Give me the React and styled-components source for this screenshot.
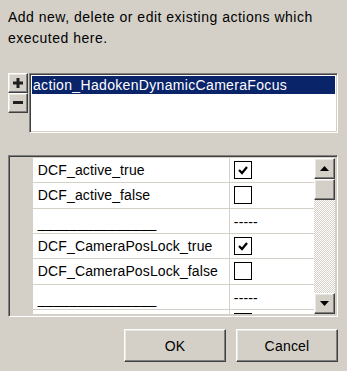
import React from 'react';
import styled, { createGlobalStyle, css } from 'styled-components';

const GlobalStyle = createGlobalStyle`
  html, body {
    margin: 0;
    padding: 0;
    background: #d4d0c8;
  }
  body {
    font-family: "Liberation Sans", Arial, sans-serif;
    font-size: 14px;
    color: #000;
  }
`;

const raised = css`
  box-sizing: border-box;
  background: #d4d0c8;
  border-style: solid;
  border-width: 1px;
  border-color: #ffffff #404040 #404040 #ffffff;
  box-shadow: inset -1px -1px 0 #808080, inset 1px 1px 0 #e8e6e1;
`;

const sunken = css`
  box-sizing: border-box;
  border-style: solid;
  border-width: 1px;
  border-color: #808080 #ffffff #ffffff #808080;
  box-shadow: inset 1px 1px 0 #404040, inset -1px -1px 0 #d4d0c8;
`;

const Dialog = styled.div`
  width: 347px;
  height: 371px;
  box-sizing: border-box;
  padding: 7px 9px 0 8px;
  display: flex;
  flex-direction: column;
`;

const Description = styled.p`
  margin: 0;
  line-height: 21px;
  letter-spacing: 0.5px;
`;

const ActionsRow = styled.div`
  display: flex;
  gap: 1px;
  margin-top: 24px;
`;

const SideButtons = styled.div`
  display: flex;
  flex-direction: column;
  width: 20px;
`;

const SmallButton = styled.button`
  ${raised};
  width: 20px;
  height: 20px;
  padding: 0;
  display: flex;
  align-items: center;
  justify-content: center;
`;

const ListBox = styled.div`
  ${sunken};
  flex: 1;
  height: 60px;
  background: #fff;
  padding: 2px;
`;

const ListItem = styled.div`
  height: 18px;
  line-height: 18px;
  padding-left: 1px;
  letter-spacing: 0.33px;
  background: ${(p) => (p.selected ? '#0a246a' : 'transparent')};
  color: ${(p) => (p.selected ? '#fff' : '#000')};
  white-space: nowrap;
`;

const Grid = styled.div`
  ${sunken};
  margin-top: 22px;
  height: 162px;
  padding: 2px;
  display: flex;
  background: #d4d0c8;
`;

const RowHeader = styled.div`
  width: 22px;
  background: #d4d0c8;
`;

const Rows = styled.div`
  width: 283px;
  overflow: hidden;
  background: #fff;
`;

const Row = styled.div`
  display: grid;
  grid-template-columns: 197px 86px;
  height: 25.33px;
  box-sizing: border-box;
  border-bottom: 1px solid #d4d0c8;
`;

const Cell = styled.div`
  display: flex;
  align-items: center;
  padding-left: ${(p) => (p.value ? '4px' : '5px')};
  border-right: ${(p) => (p.value ? 'none' : '1px solid #d4d0c8')};
  letter-spacing: 0.12px;
  white-space: nowrap;
`;

const Separator = styled.span`
  padding-top: ${(p) => p.down || 0}px;
`;

const CheckBox = styled.span`
  box-sizing: border-box;
  width: 18px;
  height: 18px;
  border: 1px solid #000;
  background: #fff;
  display: flex;
  align-items: center;
  justify-content: center;
`;

const ScrollBar = styled.div`
  width: 21px;
  display: flex;
  flex-direction: column;
  background-color: #ffffff;
  background-image: repeating-conic-gradient(#d4d0c8 0 25%, #ffffff 0 50%);
  background-size: 2px 2px;
`;

const ScrollButton = styled.div`
  ${raised};
  width: 21px;
  height: 21px;
  display: flex;
  align-items: center;
  justify-content: center;
  margin-top: ${(p) => (p.bottom ? 'auto' : '0')};
`;

const Footer = styled.div`
  display: flex;
  justify-content: flex-end;
  gap: 10px;
  margin-top: 12px;
`;

const DialogButton = styled.button`
  ${raised};
  width: 102px;
  height: 33px;
  font-family: inherit;
  font-size: 14px;
  letter-spacing: 0.2px;
  color: #000;
  padding: 0;
`;

const rows = [
  { name: 'DCF_active_true', checked: true },
  { name: 'DCF_active_false', checked: false },
  { name: '_______________', sep: true },
  { name: 'DCF_CameraPosLock_true', checked: true },
  { name: 'DCF_CameraPosLock_false', checked: false },
  { name: '_______________', sep: true },
  { name: '', checked: false },
];

const Tick = () => (
  <svg width="10" height="9" viewBox="0 0 10 9">
    <path d="M1 4 L4 7 L9 1" fill="none" stroke="#000" strokeWidth="2.2" />
  </svg>
);

const Arrow = ({ down }) => (
  <svg width="9" height="5" viewBox="0 0 9 5">
    <path d={down ? 'M0 0 H9 L4.5 5 Z' : 'M0 5 H9 L4.5 0 Z'} fill="#000" />
  </svg>
);

export default function App() {
  return (
    <>
      <GlobalStyle />
      <Dialog>
        <Description>
          Add new, delete or edit existing actions which executed here.
        </Description>
        <ActionsRow>
          <SideButtons>
            <SmallButton>
              <svg width="10" height="10" viewBox="0 0 10 10">
                <path d="M3.5 0 H6.5 V3.5 H10 V6.5 H6.5 V10 H3.5 V6.5 H0 V3.5 H3.5 Z" fill="#202020" />
              </svg>
            </SmallButton>
            <SmallButton>
              <svg width="10" height="4" viewBox="0 0 10 4">
                <rect x="0" y="0" width="10" height="3" fill="#202020" />
              </svg>
            </SmallButton>
          </SideButtons>
          <ListBox>
            <ListItem selected>action_HadokenDynamicCameraFocus</ListItem>
          </ListBox>
        </ActionsRow>
        <Grid>
          <RowHeader />
          <Rows>
            {rows.map((r, i) => (
              <Row key={i}>
                <Cell>
                  {r.sep ? <Separator down={4}>{r.name}</Separator> : r.name}
                </Cell>
                <Cell value>
                  {r.sep ? (
                    <Separator down={3}>-----</Separator>
                  ) : (
                    <CheckBox>{r.checked && <Tick />}</CheckBox>
                  )}
                </Cell>
              </Row>
            ))}
          </Rows>
          <ScrollBar>
            <ScrollButton>
              <Arrow />
            </ScrollButton>
            <ScrollButton />
            <ScrollButton bottom>
              <Arrow down />
            </ScrollButton>
          </ScrollBar>
        </Grid>
        <Footer>
          <DialogButton>OK</DialogButton>
          <DialogButton>Cancel</DialogButton>
        </Footer>
      </Dialog>
    </>
  );
}
